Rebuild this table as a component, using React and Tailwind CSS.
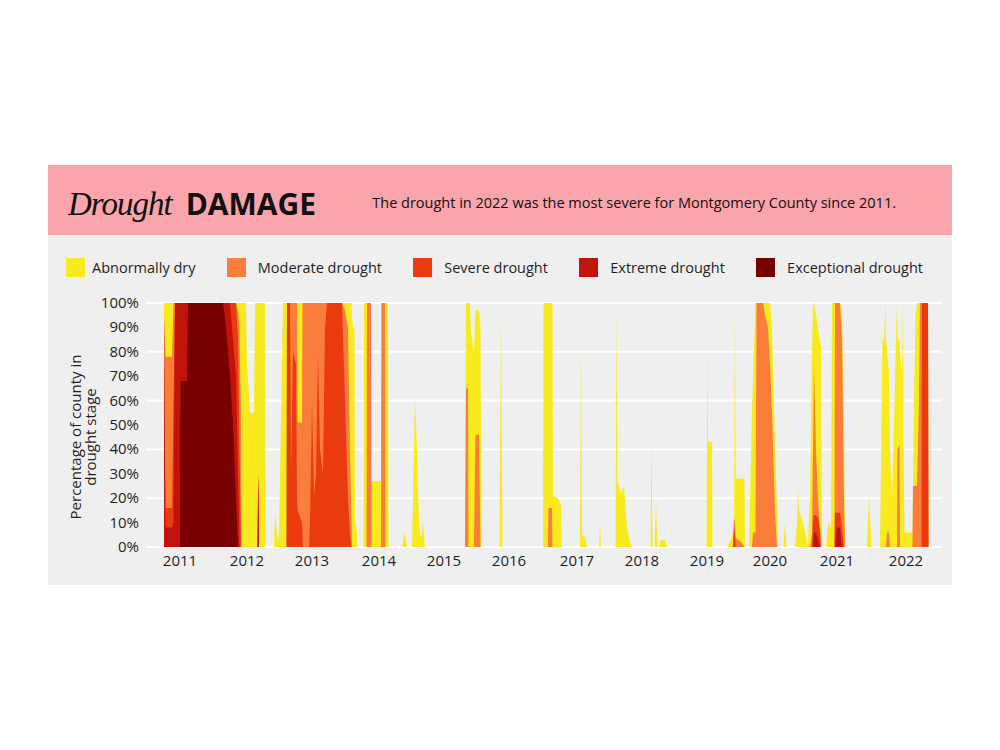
import React from 'react';

const FONT = { fontFamily: '"Open Sans", "Noto Sans", sans-serif' };

// cumulative share of county: [x, D0+, D1+, D2+, D3+, D4]
const SEGMENTS = [
  [
    [164, 100, 95, 95, 75, 0], [165.5, 100, 78, 16, 8, 0], [172, 100, 78, 16, 8, 0],
    [173.5, 100, 100, 60, 10, 0], [175, 100, 100, 100, 100, 0], [180, 100, 100, 100, 100, 0],
    [180.5, 100, 100, 100, 100, 68], [187, 100, 100, 100, 100, 68], [188, 100, 100, 100, 100, 100],
    [223, 100, 100, 100, 100, 100], [226, 100, 100, 100, 100, 90], [230, 100, 100, 100, 100, 70],
    [233, 100, 100, 100, 85, 50], [236, 100, 100, 100, 70, 20], [238, 100, 97, 85, 30, 0],
    [239.5, 100, 90, 40, 0, 0], [241, 100, 50, 0, 0, 0], [241.5, 100], [246, 100], [247, 75],
    [250, 55], [254, 55], [255, 100], [257.5, 100], [258.2, 100, 30, 30, 30], [259, 100],
    [265, 100], [265.5, 0],
  ],
  [
    [274, 0], [275, 14], [278, 2], [279, 5], [283, 100], [286.5, 100], [287, 100, 100, 100],
    [290, 100, 100, 100], [291, 100, 100, 30], [293, 100, 100, 80], [296, 100, 100, 75],
    [297, 100, 100, 20], [297.5, 100, 51, 15], [302, 100, 51, 10], [302.5, 100, 100, 5],
    [303, 100, 100, 0], [309, 100, 100, 0], [310, 100, 100, 10], [312, 100, 100, 59],
    [314, 100, 100, 20], [316, 100, 100, 30], [318, 100, 100, 79], [320, 100, 100, 40],
    [323, 100, 100, 30], [325, 100, 100, 90], [327, 100, 100, 100], [342, 100, 100, 100],
    [345, 100, 97, 60], [348, 100, 90, 20], [350, 100, 40, 5], [351.5, 100, 10, 0],
    [352, 95], [353, 90], [354.5, 90], [355, 12], [357, 5], [358, 0],
  ],
  [
    [363.5, 0], [364, 100], [366.5, 100], [367, 100, 100], [371, 100, 100], [371.5, 27],
    [381, 27], [381.5, 100, 100], [385, 100, 100], [385.5, 100], [388, 100], [388.5, 0],
  ],
  [[402.5, 0], [404, 6], [406, 3], [407, 0]],
  [[412, 0], [415, 61], [417, 40], [419, 10], [421, 3], [423, 10], [425, 0]],
  [
    [465, 0], [466, 100, 65], [468, 100, 65], [468.5, 100], [470, 100], [471, 88], [474, 80],
    [475.5, 97, 46], [479, 97, 46], [480.5, 90], [481.5, 0],
  ],
  [[499.5, 0], [501, 97], [502.5, 0]],
  [
    [543, 0], [543.5, 100], [548, 100], [548.5, 100, 16], [552, 100, 16], [552.5, 100],
    [553, 21], [558, 20], [561, 17], [562, 0],
  ],
  [[580, 0], [581, 86], [582, 5], [585, 4], [587, 0]],
  [[599, 0], [600, 11], [601, 0]],
  [[615.5, 0], [616.5, 98], [617.5, 27], [621, 22], [624, 25], [627, 8], [630, 2], [632, 0]],
  [[650.5, 0], [651.5, 45], [652.5, 0]],
  [[654.5, 0], [656, 18], [657.5, 0]],
  [[659, 0], [661, 3], [665, 3], [667, 0]],
  [[706.5, 0], [707.5, 83], [708, 43], [712, 43], [712.5, 0]],
  [
    [727, 0], [731, 3], [733, 6], [734, 12, 12, 8], [735, 98, 10, 5], [735.6, 28, 4],
    [738, 28, 3], [741, 28, 2], [744.5, 28], [745, 0],
  ],
  [
    [749, 0], [752, 56], [753, 70, 6], [755.5, 100, 6], [756.5, 100, 100], [763, 100, 100],
    [765, 100, 95], [768, 100, 90], [770, 100, 75], [772, 90, 55], [775, 40, 15], [777, 15],
    [778, 0],
  ],
  [[783.5, 0], [785, 10], [786.5, 0]],
  [[795, 0], [797, 10], [798, 24], [799, 15], [803, 10], [807, 2], [808, 0]],
  [
    [808, 0], [810, 20], [812, 80, 5], [813, 100, 40, 10], [814, 100, 75, 13, 6],
    [816, 95, 40, 13, 6], [818, 90, 20, 12, 3], [820, 84, 8, 6], [821, 83], [822, 0],
  ],
  [
    [826, 0], [828, 10], [831, 8], [832, 100], [834.5, 100], [835, 100, 100, 14],
    [837, 100, 100, 14, 8], [840, 100, 100, 14, 8], [842, 97, 85, 8], [844, 50, 20], [845, 0],
  ],
  [[867, 0], [869, 21], [871.5, 0]],
  [
    [880, 0], [882.5, 86], [884, 84], [885.5, 100], [886, 84], [887, 82, 6], [889, 70, 6],
    [890, 40], [892, 20], [894, 50], [896, 87], [897, 100], [897.5, 85, 40], [899.5, 85, 42],
    [900, 80], [902, 70], [903, 100], [903.5, 40], [904.5, 6], [912.5, 6], [913, 25, 25],
    [914, 60, 25], [915.5, 95, 25], [917, 100, 25], [919, 100, 60], [920, 100, 100],
    [921.5, 100, 100], [922, 100, 100, 100], [928, 100, 100, 100], [928.5, 0],
  ],
];

const STAGES = [
  { label: 'Abnormally dry', color: '#f7eb1f' },
  { label: 'Moderate drought', color: '#fb7d3b' },
  { label: 'Severe drought', color: '#e93b0e' },
  { label: 'Extreme drought', color: '#c1130b' },
  { label: 'Exceptional drought', color: '#760100' },
];

const YEARS = [
  [2011, 180], [2012, 247], [2013, 312], [2014, 379], [2015, 444], [2016, 509],
  [2017, 577], [2018, 642], [2019, 707], [2020, 770], [2021, 837], [2022, 906],
];

const BASE = 547;
const y = (p) => BASE - p * 2.44;

function layerPath(seg, k) {
  const pts = seg.map((r) => [r[0], r[k + 1] || 0]);
  if (!pts.some(([, v]) => v > 0)) return null;
  const first = pts[0][0];
  const last = pts[pts.length - 1][0];
  return `M${first},${BASE} ` + pts.map(([x, v]) => `L${x},${y(v).toFixed(1)}`).join(' ') + ` L${last},${BASE} Z`;
}

function Chart() {
  return (
    <svg width="904" height="290" viewBox="48 290 904 290" className="block" style={FONT}>
      {[0, 20, 40, 60, 80, 100].map((p) => (
        <line key={p} x1="146" x2="942" y1={y(p)} y2={y(p)} stroke="#ffffff" strokeWidth="2" />
      ))}
      {STAGES.map((s, k) =>
        SEGMENTS.map((seg, i) => {
          const d = layerPath(seg, k);
          return d ? <path key={`${k}-${i}`} d={d} fill={s.color} /> : null;
        })
      )}
      {[0, 10, 20, 30, 40, 50, 60, 70, 80, 90, 100].map((p) => (
        <text key={p} x="139" y={y(p) + 1} textAnchor="end" dominantBaseline="middle" fontSize="15" fill="#1f1f1f">
          {p}%
        </text>
      ))}
      <text transform="rotate(-90)" textAnchor="middle" fontSize="15" fill="#1f1f1f">
        <tspan x="-437" y="81">Percentage of county in</tspan>
        <tspan x="-437" y="96">drought stage</tspan>
      </text>
      {YEARS.map(([yr, x]) => (
        <text key={yr} x={x} y="566" textAnchor="middle" fontSize="15" fill="#1f1f1f">
          {yr}
        </text>
      ))}
    </svg>
  );
}

export default function App() {
  return (
    <div className="w-[1000px] h-[750px] bg-white pt-[165px] pl-[48px]" style={FONT}>
      <div className="w-[904px] h-[420px] bg-[#efefef] flex flex-col">
        {/* Header */}
        <div className="h-[70px] bg-[#f9a5ab] flex items-center pl-[20px] pr-[56px] pt-[5px] text-[#111]">
          <span
            className="text-[33px] italic leading-none mt-[4px] tracking-[-1px]"
            style={{ fontFamily: '"Liberation Serif", serif' }}
          >
            Drought
          </span>
          <span className="text-[30px] font-bold leading-none ml-[14px] mt-[2px]">DAMAGE</span>
          <span className="ml-auto text-[14.5px] mt-[1px]">
            The drought in 2022 was the most severe for Montgomery County since 2011.
          </span>
        </div>

        {/* Legend */}
        <div className="flex items-center justify-between pl-[18px] pr-[29px] mt-[23px] h-[19px] text-[14.5px] text-[#1f1f1f]">
          {STAGES.map((s, i) => (
            <div key={s.label} className={i === 0 ? 'flex items-center gap-[7px]' : 'flex items-center gap-[12px]'}>
              <span className="w-[19px] h-[19px] block" style={{ backgroundColor: s.color }} />
              <span>{s.label}</span>
            </div>
          ))}
        </div>

        <div className="mt-[13px]">
          <Chart />
        </div>
      </div>
    </div>
  );
}
